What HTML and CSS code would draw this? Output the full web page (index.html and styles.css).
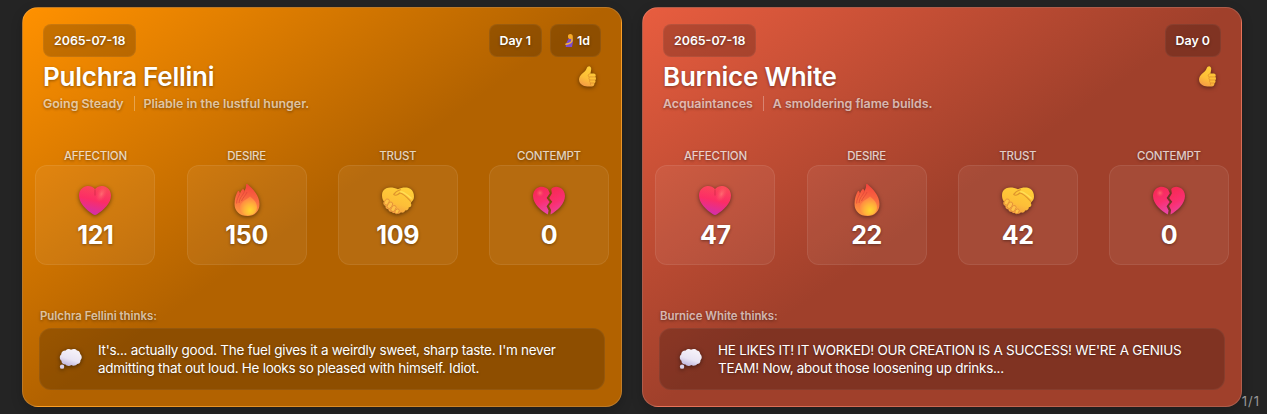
FILE: index.html
```html
<!DOCTYPE html>
<html lang="en">
<head>
  <meta charset="UTF-8">
  <title>Relationship Tracker</title>
  <link rel="stylesheet" href="styles.css">
</head>
<body>

  <!-- shared icons -->
  <svg class="icon-defs" width="0" height="0">
    <defs>
      <linearGradient id="gHeart" x1="0.65" y1="0" x2="0.4" y2="1">
        <stop offset="0" stop-color="#fb4a58"/>
        <stop offset="0.5" stop-color="#fc2d66"/>
        <stop offset="1" stop-color="#d22fae"/>
      </linearGradient>
      <radialGradient id="gHeartLight" cx="0.5" cy="0.5" r="0.5">
        <stop offset="0" stop-color="#ff7f78" stop-opacity="0.7"/>
        <stop offset="1" stop-color="#ff5064" stop-opacity="0"/>
      </radialGradient>
      <linearGradient id="gBroken" x1="0.3" y1="0" x2="0.6" y2="1">
        <stop offset="0" stop-color="#f62952"/>
        <stop offset="0.55" stop-color="#fa2f70"/>
        <stop offset="1" stop-color="#e946a8"/>
      </linearGradient>
      <linearGradient id="gFlame" x1="0.6" y1="0" x2="0.5" y2="1">
        <stop offset="0" stop-color="#f4413d"/>
        <stop offset="0.5" stop-color="#f96c40"/>
        <stop offset="1" stop-color="#ff9c3f"/>
      </linearGradient>
      <radialGradient id="gCore" cx="0.6" cy="0.75" r="0.7">
        <stop offset="0" stop-color="#ffd52f"/>
        <stop offset="0.5" stop-color="#ffb13a"/>
        <stop offset="1" stop-color="#ff8143"/>
      </radialGradient>
      <linearGradient id="gSkin" x1="0.7" y1="0" x2="0.3" y2="1">
        <stop offset="0" stop-color="#ffcf38"/>
        <stop offset="0.6" stop-color="#fdbe38"/>
        <stop offset="1" stop-color="#f49a45"/>
      </linearGradient>
      <linearGradient id="gCloud" x1="0.7" y1="0" x2="0.3" y2="1">
        <stop offset="0" stop-color="#f7f3fa"/>
        <stop offset="0.6" stop-color="#e9e4f3"/>
        <stop offset="1" stop-color="#bdb2dc"/>
      </linearGradient>

      <symbol id="heart" viewBox="0 0 32 32">
        <path fill="url(#gHeart)" d="M16 4C13.500 1 10 .5 7 1.200 2.800 2.200 0 5.800 0 10.500c0 8 7.500 14.500 14 18.700 1.300.9 2.700.9 4 0C24.500 25 32 18.500 32 10.500c0-4.700-2.800-8.300-7-9.300-3-.7-6.500-.2-9 2.800Z"/>
        <ellipse fill="url(#gHeartLight)" cx="22.500" cy="9" rx="5" ry="9" transform="rotate(25 22.500 9)"/>
        <path stroke="#d5294b" stroke-opacity=".65" stroke-width="1.300" fill="none" d="M16 4.500v6"/>
      </symbol>

      <symbol id="flame" viewBox="0 0 32 32">
        <path fill="url(#gFlame)" d="M16.200 0C22 5 28.500 11.500 28.500 20c0 7.500-5 12-12 12C9 32 3.500 27.500 3.500 20c0-5.500 1.500-9.500 3.200-12.500.5-.8 1.500-.6 1.700.3l.5 1.600c.6-1.600 1.400-3 2.400-4 .7-.7 1.500-.4 1.700.5l.3 1C14.800 5 15.200 2.500 15.200.5c0-.5.6-.9 1-.5Z"/>
        <path stroke="#dd4539" stroke-width="1" stroke-opacity=".7" fill="none" d="M9 9.500c-2 4-3.300 6-3.400 10M13.500 7c-1 4-5 6-5.500 12M16 8c-1 3-4.500 6-5.500 9"/>
        <path fill="url(#gCore)" d="M19 12.500c4.500 3.500 7 6.500 7 10.500 0 5-3.500 8.200-8.600 8.200-5 0-8.400-3-8.400-7.700 0-5.500 5-7 10-11Z"/>
      </symbol>

      <symbol id="handshake" viewBox="0 0 34 30">
        <path fill="url(#gSkin)" d="M4.500 1.500C8 0 13 .8 17 2.500 21 .6 26.500 0 30 2c3 1.800 4 5 4 8.500 0 3-1.700 4.500-3.500 6.500 1.500 2 .5 4.500-2 4.700.2 2.300-2 3.800-4 3.300-.5 2-2.800 3-4.500 2-1 2-4 2-5.600.5-1.400 1-3.400.5-4.200-1-2 .3-3.500-1-3.500-2.700-2 0-3.500-1.500-3-3.500-2-.5-3-2.800-1.700-4.700C.7 13.600 0 11.500 0 8.500c0-3 1.500-5.700 4.500-7Z"/>
        <path fill="none" stroke="#df952d" stroke-width="1.300" stroke-linecap="round" d="M19.500 3c-3 1-5.500 2.500-7 5 1.500 1.500 4.500.5 6.500-1.500 4 .5 8 5 11.500 9"/>
        <path fill="none" stroke="#ffdf55" stroke-width="1.500" stroke-linecap="round" d="M20 5c5 1 8 5 11 7"/>
        <g fill="#ffc347" stroke="#e08937" stroke-width=".8">
          <ellipse cx="5" cy="16" rx="2.300" ry="3.500" transform="rotate(35 5 16)"/>
          <ellipse cx="8.400" cy="19.500" rx="2.300" ry="3.800" transform="rotate(35 8.400 19.500)"/>
          <ellipse cx="12.200" cy="23" rx="2.200" ry="3.600" transform="rotate(35 12.200 23)"/>
          <ellipse cx="16" cy="26" rx="1.900" ry="2.800" transform="rotate(35 16 26)"/>
        </g>
      </symbol>

      <symbol id="broken" viewBox="0 0 32 30">
        <path fill="url(#gBroken)" d="M15 3.300C12.500.8 9 .2 6 1.200 2 2.500 0 6 0 10c0 8 8.500 15 14.800 18.500l.8-4-2-4.300 3-4.200-3-4 3.200-4.700Z"/>
        <path fill="url(#gBroken)" d="M18.200 3c2.300-2.500 5.300-2.800 8.300-1.600C30 2.800 32 6 32 10c0 7.600-7.500 14.600-14.500 18.500l.5-4.500-2-4 3.200-4.200-3-3.800 2.600-4.500Z"/>
        <ellipse fill="url(#gHeartLight)" cx="7" cy="7" rx="4" ry="4"/>
      </symbol>

      <symbol id="cloud" viewBox="0 0 24 22">
        <path fill="url(#gCloud)" d="M7 2.200C8.500.5 11 .2 12.500 1.300 14.500 0 17.500.3 18.700 2c2 .2 3.500 1.800 3.400 3.800 2 1.500 2.200 5 .3 6.500.3 2.400-1.500 4-3.400 4-1.300 1.900-4.500 2.400-6.200 1-1.800 1.400-4.700 1.200-6-.6-2.600.1-4.400-1.500-4.200-3.900C.2 11.200.4 7.500 2.300 6.200 2.200 3.900 4.500 2 7 2.200Z"/>
        <circle fill="#d8d0ea" cx="3.200" cy="19" r="2.300"/>
      </symbol>

      <symbol id="thumb" viewBox="0 0 17 21">
        <path fill="url(#gSkin)" d="M8.700.7c1.600-1.200 3.400-.2 3.500 2 .1 1.700-.5 3.400-.8 4.900h3.300c1.900 0 2.600 2 1.500 3.200 1.100 1 1 2.600 0 3.400.7 1.200.3 2.500-.8 3.100.2 1.700-.9 3-2.700 3.100-3.200.2-6.700.1-8.700-.9C1.300 18.200 0 16 0 13.500 0 9 5 7 7 3.800c.7-1.100.6-2.300 1.700-3.100Z"/>
        <path fill="none" stroke="#dc8c2c" stroke-width=".7" stroke-linecap="round" d="M11.400 7.600c-1.500.3-2.400 1-2.200 2.300.1.900.8 1 1.400 1-1 1-.9 2.500.3 3-.7 1-.5 2.500.6 3-.4.9-.3 1.700.3 2.200M11 10.900h4.800M11.200 14h4.500M11.600 17h3.500"/>
      </symbol>

      <symbol id="pregnant" viewBox="0 0 9 13">
        <path fill="#7b4bd0" d="M3.500 4.500h3.300c1.200 1.800 1.400 3.500.8 5.500L7 13H.8C.5 10.500 1.400 8.500 2.300 7.200Z"/>
        <path fill="#f6a928" d="M3 2C3 .7 4 0 5.300 0c1.600 0 2.500 1 2.500 2.500v2.300L4.700 5C3.500 4.700 2.800 3.500 3 2Z"/>
        <path fill="none" stroke="#f7b23a" stroke-width="1.500" stroke-linecap="round" d="M7 5c.4 2-.5 3.500-3.200 4.500L1 10.300"/>
      </symbol>
    </defs>
  </svg>

  <main class="cards">
    <article class="card orange">
      <header class="card-header">
        <div class="badges">
          <span class="badge">2065-07-18</span>
          <span class="badge push">Day 1</span>
          <span class="badge"><svg class="icon-tiny"><use href="#pregnant"/></svg>1d</span>
        </div>
        <div class="name-row">
          <h2>Pulchra Fellini</h2>
          <svg class="icon-thumb"><use href="#thumb"/></svg>
        </div>
        <div class="status">
          <span>Going Steady</span>
          <span class="mood">Pliable in the lustful hunger.</span>
        </div>
      </header>
      <section class="stats">
        <div class="stat">
          <h3>Affection</h3>
          <div class="stat-box"><svg class="icon"><use href="#heart"/></svg><b>121</b></div>
        </div>
        <div class="stat">
          <h3>Desire</h3>
          <div class="stat-box"><svg class="icon flame"><use href="#flame"/></svg><b>150</b></div>
        </div>
        <div class="stat">
          <h3>Trust</h3>
          <div class="stat-box"><svg class="icon"><use href="#handshake"/></svg><b>109</b></div>
        </div>
        <div class="stat">
          <h3>Contempt</h3>
          <div class="stat-box"><svg class="icon"><use href="#broken"/></svg><b>0</b></div>
        </div>
      </section>
      <footer class="thoughts">
        <h4>Pulchra Fellini thinks:</h4>
        <div class="thought-box">
          <svg class="icon-cloud"><use href="#cloud"/></svg>
          <p>It's... actually good. The fuel gives it a weirdly sweet, sharp taste. I'm never admitting that out loud. He looks so pleased with himself. Idiot.</p>
        </div>
      </footer>
    </article>

    <article class="card red">
      <header class="card-header">
        <div class="badges">
          <span class="badge">2065-07-18</span>
          <span class="badge push">Day 0</span>
        </div>
        <div class="name-row">
          <h2>Burnice White</h2>
          <svg class="icon-thumb"><use href="#thumb"/></svg>
        </div>
        <div class="status">
          <span>Acquaintances</span>
          <span class="mood">A smoldering flame builds.</span>
        </div>
      </header>
      <section class="stats">
        <div class="stat">
          <h3>Affection</h3>
          <div class="stat-box"><svg class="icon"><use href="#heart"/></svg><b>47</b></div>
        </div>
        <div class="stat">
          <h3>Desire</h3>
          <div class="stat-box"><svg class="icon flame"><use href="#flame"/></svg><b>22</b></div>
        </div>
        <div class="stat">
          <h3>Trust</h3>
          <div class="stat-box"><svg class="icon"><use href="#handshake"/></svg><b>42</b></div>
        </div>
        <div class="stat">
          <h3>Contempt</h3>
          <div class="stat-box"><svg class="icon"><use href="#broken"/></svg><b>0</b></div>
        </div>
      </section>
      <footer class="thoughts">
        <h4>Burnice White thinks:</h4>
        <div class="thought-box">
          <svg class="icon-cloud"><use href="#cloud"/></svg>
          <p>HE LIKES IT! IT WORKED! OUR CREATION IS A SUCCESS! WE'RE A GENIUS TEAM! Now, about those loosening up drinks...</p>
        </div>
      </footer>
    </article>
  </main>

  <span class="page-count">1/1</span>

</body>
</html>
```
FILE: styles.css
```css
* {
  box-sizing: border-box;
}

body {
  margin: 0;
  height: 414px;
  overflow: hidden;
  background: #242424;
  color: #fff;
  font-family: Inter, sans-serif;
}

h2, h3, h4, p {
  margin: 0;
}

svg {
  display: block;
  flex: none;
}

.icon-defs {
  position: absolute;
}

.cards {
  display: flex;
  gap: 20px;
  padding: 7px 0 0 22px;
}

.card {
  display: flex;
  flex-direction: column;
  width: 600px;
  height: 400px;
  border: 1px solid rgba(255, 255, 255, 0.15);
  border-radius: 16px;
  box-shadow: 0 4px 12px rgba(0, 0, 0, 0.2);
  text-shadow: 0 1px 3px rgba(0, 0, 0, 0.4);
}

.orange {
  background: linear-gradient(145deg, #ff9100 0%, #b26200 50%, #b26200 100%);
}

.red {
  background: linear-gradient(145deg, #e85d3f 0%, #a0402b 50%, #a0402b 100%);
}

.card-header {
  padding: 16px 20px 0;
}

.badges {
  display: flex;
  gap: 8px;
}

.badge {
  display: flex;
  align-items: center;
  gap: 3px;
  height: 33px;
  padding: 0 10px;
  border: 1px solid rgba(255, 255, 255, 0.05);
  border-radius: 8px;
  background: rgba(0, 0, 0, 0.2);
  font-size: 12.4px;
  font-weight: 600;
}

.push {
  margin-left: auto;
}

.name-row {
  display: flex;
  align-items: center;
  justify-content: space-between;
  height: 39px;
  padding-right: 5px;
}

h2 {
  font-size: 26px;
  font-weight: 600;
  line-height: 31px;
  letter-spacing: -0.25px;
}

.status {
  display: flex;
  align-items: center;
  height: 15px;
  font-size: 12.4px;
  font-weight: 600;
  color: rgba(255, 255, 255, 0.65);
}

.mood {
  margin-left: 10px;
  padding-left: 9px;
  border-left: 1px solid rgba(255, 255, 255, 0.3);
}

.stats {
  display: flex;
  justify-content: space-between;
  padding: 0 12px 0 12.4px;
  margin-top: 35px;
}

.stat {
  width: 120px;
}

h3 {
  height: 19px;
  font-size: 11.5px;
  font-weight: 500;
  line-height: 20px;
  letter-spacing: -0.25px;
  text-align: center;
  text-transform: uppercase;
  color: rgba(255, 255, 255, 0.75);
}

.stat-box {
  display: flex;
  flex-direction: column;
  align-items: center;
  height: 100px;
  padding-top: 19px;
  border: 1px solid rgba(255, 255, 255, 0.08);
  border-radius: 12px;
  background: rgba(255, 255, 255, 0.06);
}

.stat-box b {
  margin-top: 4px;
  font-size: 25px;
  font-weight: 700;
  line-height: 29px;
  letter-spacing: -0.3px;
}

.icon {
  width: 32px;
  height: 32px;
}

.flame {
  margin: -1px 0 1px;
}

.icon, .icon-cloud, .icon-thumb {
  filter: drop-shadow(0 1px 2px rgba(0, 0, 0, 0.5));
}

.icon-thumb {
  width: 17px;
  height: 21px;
}

.icon-tiny {
  width: 9px;
  height: 13px;
  margin-left: 4px;
}

.icon-cloud {
  width: 23px;
  height: 22px;
}

.thoughts {
  margin-top: auto;
  padding: 0 16px 16px;
}

h4 {
  padding-left: 1px;
  margin-bottom: 5px;
  font-size: 11.4px;
  font-weight: 600;
  line-height: 14px;
  color: rgba(255, 255, 255, 0.65);
}

.thought-box {
  display: flex;
  align-items: center;
  gap: 16px;
  height: 62px;
  padding: 0 20px 0 19px;
  border: 1px solid rgba(255, 255, 255, 0.05);
  border-radius: 12px;
  background: rgba(0, 0, 0, 0.2);
}

.thought-box p {
  font-size: 13.5px;
  line-height: 18px;
  letter-spacing: -0.27px;
}

/* sits over the lower right corner of the window */
.page-count {
  position: absolute;
  right: 7px;
  bottom: 5px;
  font-size: 13px;
  line-height: 15px;
  letter-spacing: 1px;
  color: #999;
}
```
